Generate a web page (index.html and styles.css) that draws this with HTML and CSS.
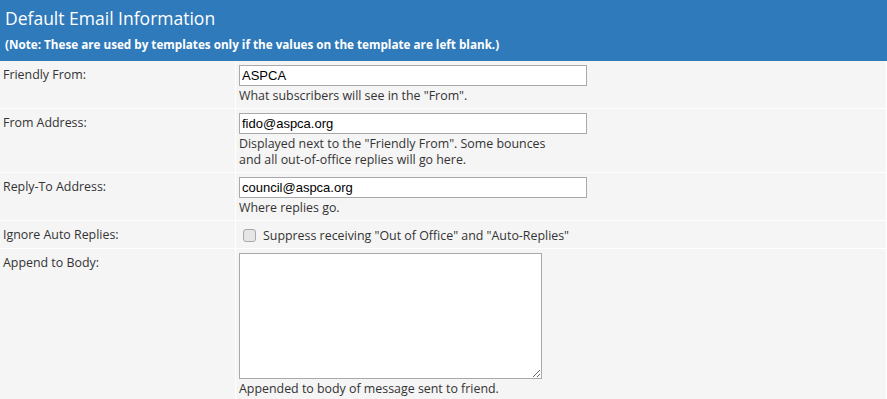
FILE: index.html
```html
<!DOCTYPE html>
<html lang="en">
<head>
  <meta charset="UTF-8" />
  <meta name="viewport" content="width=device-width, initial-scale=1.0"/>
  <title>Default Email Information</title>
  <link rel="stylesheet" href="styles.css">
</head>
<body>

  <div class="panel">
    <div class="panel-head">
      <h2>Default Email Information</h2>
      <div class="note">(Note: These are used by templates only if the values on the template are left blank.)</div>
    </div>

    <table class="form-table">
      <tr>
        <td class="label">Friendly From:</td>
        <td class="field">
          <input type="text" class="text-input" value="ASPCA">
          <div class="hint">What subscribers will see in the "From".</div>
        </td>
      </tr>
      <tr>
        <td class="label">From Address:</td>
        <td class="field">
          <input type="text" class="text-input" value="fido@aspca.org">
          <div class="hint">Displayed next to the "Friendly From". Some bounces<br>and all out-of-office replies will go here.</div>
        </td>
      </tr>
      <tr>
        <td class="label">Reply-To Address:</td>
        <td class="field">
          <input type="text" class="text-input" value="council@aspca.org">
          <div class="hint">Where replies go.</div>
        </td>
      </tr>
      <tr>
        <td class="label">Ignore Auto Replies:</td>
        <td class="field check-cell">
          <label class="check"><input type="checkbox"> Suppress receiving "Out of Office" and "Auto-Replies"</label>
        </td>
      </tr>
      <tr>
        <td class="label">Append to Body:</td>
        <td class="field">
          <textarea class="body-input"></textarea>
          <div class="hint">Appended to body of message sent to friend.</div>
        </td>
      </tr>
    </table>
  </div>

</body>
</html>
```

FILE: styles.css
```css
body {
  font-family: "Open Sans", "Noto Sans", sans-serif;
  background-color: #f5f5f5;
  color: #333;
  margin: 0;
}

.panel-head {
  background-color: #2f7abb;
  color: white;
  padding: 6px 5px 8px;
  height: 47px;
}

.panel-head h2 {
  margin: 0;
  font-size: 17.5px;
  font-weight: normal;
  line-height: 24px;
}

.note {
  font-size: 11.7px;
  font-weight: bold;
  margin-top: 6px;
}

.form-table {
  border-collapse: collapse;
  width: 100%;
  font-size: 12.4px;
}

.form-table td {
  border: 1px solid #fff;
  vertical-align: top;
}

.form-table tr:first-child td {
  border-top: none;
}

.form-table td:first-child {
  border-left: none;
}

.label {
  width: 230px;
  padding: 5px 2px 2px 3px;
  line-height: 17px;
}

.field {
  padding: 4px 3px 4px 3px;
}

.field.check-cell {
  padding-bottom: 3px;
}

.text-input {
  display: block;
  width: 348px;
  height: 21px;
  box-sizing: border-box;
  border: 1px solid #a9a9a9;
  padding: 1px 2px;
  margin: 0;
  font-family: "Liberation Sans", Arial, sans-serif;
  font-size: 13px;
  color: #000;
}

.hint {
  margin-top: 2px;
  line-height: 16px;
}

.check {
  display: flex;
  align-items: center;
  gap: 7px;
  padding: 3px 0 2px 4px;
  line-height: 15px;
}

.check input {
  appearance: none;
  margin: 0;
  width: 13px;
  height: 13px;
  border: 1px solid #a9a9a9;
  border-radius: 3px;
  background-color: #e6e6e6;
}

.body-input {
  display: block;
  width: 303px;
  height: 126px;
  box-sizing: border-box;
  border: 1px solid #a9a9a9;
  margin: 0;
  resize: both;
}
```
